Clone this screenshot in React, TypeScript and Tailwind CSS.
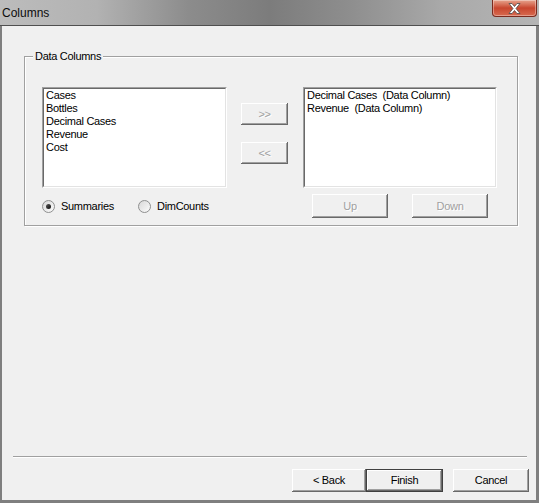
import React from "react";

const leftItems = ["Cases", "Bottles", "Decimal Cases", "Revenue", "Cost"];
const rightItems = ["Decimal Cases  (Data Column)", "Revenue  (Data Column)"];

const raised =
  "bg-[#f0f0f0] shadow-[inset_-1px_-1px_0_#696969,inset_1px_1px_0_#fff,inset_-2px_-2px_0_#a0a0a0]";

// dialog text: narrow 8pt look
const txt = "text-[11px] tracking-[-0.3px]";

function Button({
  label,
  width,
  height,
  disabled,
  isDefault,
}: {
  label: string;
  width: string;
  height: string;
  disabled?: boolean;
  isDefault?: boolean;
}) {
  return (
    <button
      className={`${width} ${height} ${raised} flex items-center justify-center ${txt} ${
        isDefault ? "border border-[#404040]" : ""
      } ${disabled ? "text-[#a0a0a0] [text-shadow:1px_1px_0_#fff]" : "text-black"}`}
    >
      <span className="whitespace-pre">{label}</span>
    </button>
  );
}

function ListBox({ items, width }: { items: string[]; width: string }) {
  return (
    <div
      className={`${width} h-[101px] bg-white border border-t-[#a0a0a0] border-l-[#a0a0a0] border-r-white border-b-white`}
    >
      <div className="h-full border border-t-[#696969] border-l-[#696969] border-r-[#e3e3e3] border-b-[#e3e3e3] pl-[2px]">
        {items.map((item) => (
          <div key={item} className={`whitespace-pre ${txt} leading-[13px] text-black`}>
            {item}
          </div>
        ))}
      </div>
    </div>
  );
}

function Radio({ label, checked }: { label: string; checked?: boolean }) {
  return (
    <div className="flex items-center gap-[6px]">
      <span className="w-[13px] h-[13px] rounded-full border border-[#8e8f8f] bg-gradient-to-br from-[#d8d8d8] to-[#fbfbfb] flex items-center justify-center">
        {checked && (
          <span className="w-[5px] h-[5px] rounded-full bg-gradient-to-br from-[#5a5a5a] to-[#0e0e0e]" />
        )}
      </span>
      <span className={`${txt} text-black`}>{label}</span>
    </div>
  );
}

export default function App() {
  return (
    <div
      className="w-[539px] h-[503px] flex flex-col bg-[#f0f0f0] overflow-hidden"
      style={{ fontFamily: '"Liberation Sans", Arial, sans-serif' }}
    >
      {/* Title bar */}
      <div className="h-[25px] flex items-start justify-between bg-[linear-gradient(90deg,#bcbcbc_0%,#b2b2b2_18%,#8c8c8c_35%,#7c7c7c_50%,#8e8e8e_65%,#a9a9a9_82%,#b5b5b5_100%)]">
        <span className="pl-[2px] pt-[4px] text-[12px] text-[#0c0c0c]">Columns</span>
        <div className="mr-[2px] w-[45px] h-[17px] rounded-b-[4px] border border-t-0 border-[#7a2a1e] bg-gradient-to-b from-[#e6a38e] via-[#c8452e] to-[#d76a4f] shadow-[inset_0_0_0_1px_rgba(255,255,255,0.35)] flex items-center justify-center">
          <svg width="13" height="11" viewBox="0 0 13 11">
            <path
              d="M1 0.5h3l2.5 3 2.5-3h3l-4 5 4 5h-3l-2.5-3-2.5 3h-3l4-5z"
              fill="#fff"
              stroke="#4a4a4a"
              strokeWidth="0.8"
              strokeLinejoin="round"
            />
          </svg>
        </div>
      </div>
      <div className="h-px bg-[#4f4f4f]" />

      {/* Client area */}
      <div className="flex-1 flex flex-col border-l-2 border-r-[3px] border-b-[3px] border-[#7f7f7f]">
        {/* Data Columns group */}
        <div className="relative mt-[30px] ml-[22px] w-[494px] h-[170px] border border-[#a0a0a0] shadow-[inset_1px_1px_0_#fff,1px_1px_0_#fff] pl-[17px] pt-[30px]">
          <span className={`absolute left-[8px] top-[-8px] px-[2px] bg-[#f0f0f0] ${txt} leading-[14px] text-black`}>
            Data Columns
          </span>

          <div className="flex">
            <ListBox items={leftItems} width="w-[185px]" />
            <div className="ml-[14px] mt-[16px] flex flex-col gap-[17px]">
              <Button label=">>" width="w-[47px]" height="h-[22px]" disabled />
              <Button label="<<" width="w-[47px]" height="h-[22px]" disabled />
            </div>
            <div className="ml-[15px]">
              <ListBox items={rightItems} width="w-[194px]" />
            </div>
          </div>

          <div className="flex mt-[6px]">
            <div className="w-[261px] h-[24px] flex items-center">
              <div className="w-[96px]">
                <Radio label="Summaries" checked />
              </div>
              <Radio label="DimCounts" />
            </div>
            <div className="pl-[9px] flex gap-[24px]">
              <Button label="Up" width="w-[76px]" height="h-[24px]" disabled />
              <Button label="Down" width="w-[76px]" height="h-[24px]" disabled />
            </div>
          </div>
        </div>

        {/* Separator */}
        <div className="mt-[230px] ml-[11px] w-[514px]">
          <div className="h-px bg-[#a0a0a0]" />
          <div className="h-px bg-white" />
        </div>

        {/* Wizard buttons */}
        <div className="mt-[11px] pr-[7px] flex justify-end">
          <Button label="< Back" width="w-[74px]" height="h-[23px]" />
          <Button label="Finish" width="w-[77px]" height="h-[23px]" isDefault />
          <div className="w-[10px]" />
          <Button label="Cancel" width="w-[76px]" height="h-[23px]" />
        </div>
      </div>
    </div>
  );
}
